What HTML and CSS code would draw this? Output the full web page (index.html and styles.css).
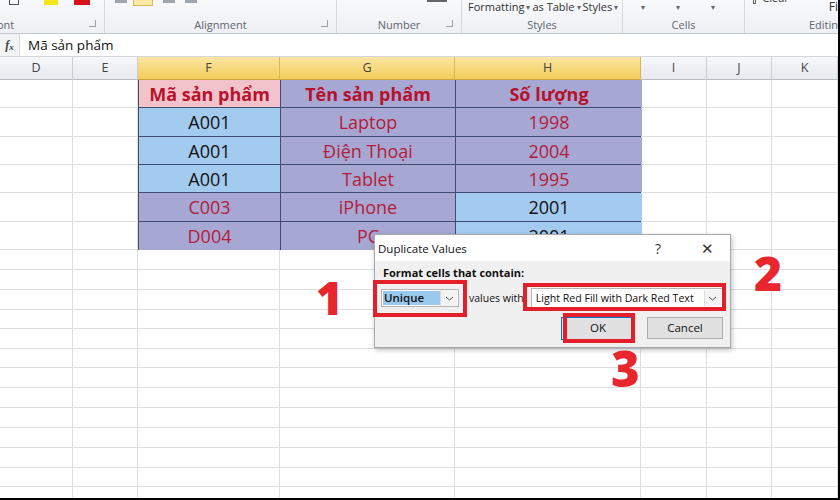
FILE: index.html
```html
<!DOCTYPE html>
<html lang="vi">
<head>
<meta charset="utf-8">
<title>Duplicate Values</title>
<link rel="stylesheet" href="styles.css">
</head>
<body>
<div class="frame">
  <div class="ribbon">
    <div class="grp g0">
      <div class="tops"><span class="ic grid"></span><span class="ic yel"></span><span class="ic red"></span></div>
      <div class="lbl">ont</div><span class="launch"></span>
    </div>
    <div class="grp g1">
      <div class="tops"><span class="ic gl"></span><span class="ic hl"></span><span class="ic gl"></span><span class="ic gl"></span></div>
      <div class="lbl">Alignment</div><span class="launch"></span>
    </div>
    <div class="grp g2">
      <div class="tops"><span class="ic dec"></span></div>
      <div class="lbl">Number</div><span class="launch"></span>
    </div>
    <div class="grp g3">
      <div class="tops txt">Formatting <b>▾</b> as Table <b>▾</b> Styles <b>▾</b></div>
      <div class="lbl">Styles</div>
    </div>
    <div class="grp g4">
      <div class="tops arrows"><b>▾</b><b>▾</b><b>▾</b></div>
      <div class="lbl">Cells</div>
    </div>
    <div class="grp g5">
      <div class="tops txt"><span class="eraser"></span><span class="clear">Clear</span><span class="fi">Fi</span></div>
      <div class="lbl">Editin</div>
    </div>
  </div>
  <div class="fbar">
    <div class="fx"><i>f</i><i class="x">x</i></div>
    <div class="finput">Mã sản phẩm</div>
  </div>
  <div class="sheet">
    <div class="ch">D</div><div class="ch">E</div><div class="ch sel">F</div><div class="ch sel">G</div><div class="ch sel">H</div><div class="ch">I</div><div class="ch">J</div><div class="ch">K</div>

    <div class="tbl">
      <div class="t pink hd">Mã sản phẩm</div><div class="t lav hd">Tên sản phẩm</div><div class="t lav hd">Số lượng</div>
      <div class="t blue">A001</div><div class="t lav">Laptop</div><div class="t lav">1998</div>
      <div class="t blue">A001</div><div class="t lav">Điện Thoại</div><div class="t lav">2004</div>
      <div class="t blue">A001</div><div class="t lav">Tablet</div><div class="t lav">1995</div>
      <div class="t lav">C003</div><div class="t lav">iPhone</div><div class="t blue">2001</div>
      <div class="t lav">D004</div><div class="t lav">PC</div><div class="t blue">2001</div>
    </div>

    <div class="c"></div><div class="c"></div><div class="c"></div><div class="c"></div><div class="c"></div>
    <div class="c"></div><div class="c"></div><div class="c"></div><div class="c"></div><div class="c"></div>
    <div class="c"></div><div class="c"></div><div class="c"></div><div class="c"></div><div class="c"></div>
    <div class="c"></div><div class="c"></div><div class="c"></div><div class="c"></div><div class="c"></div>
    <div class="c"></div><div class="c"></div><div class="c"></div><div class="c"></div><div class="c"></div>
    <div class="c"></div><div class="c"></div><div class="c"></div><div class="c"></div><div class="c"></div>

    <div class="c"></div><div class="c"></div><div class="c"></div><div class="c"></div><div class="c"></div><div class="c"></div><div class="c"></div><div class="c"></div>
    <div class="c"></div><div class="c"></div><div class="c"></div><div class="c"></div><div class="c"></div><div class="c"></div><div class="c"></div><div class="c"></div>
    <div class="c"></div><div class="c"></div><div class="c"></div><div class="c"></div><div class="c"></div><div class="c"></div><div class="c"></div><div class="c"></div>
    <div class="c"></div><div class="c"></div><div class="c"></div><div class="c"></div><div class="c"></div><div class="c"></div><div class="c"></div><div class="c"></div>
    <div class="c"></div><div class="c"></div><div class="c"></div><div class="c"></div><div class="c"></div><div class="c"></div><div class="c"></div><div class="c"></div>
    <div class="c"></div><div class="c"></div><div class="c"></div><div class="c"></div><div class="c"></div><div class="c"></div><div class="c"></div><div class="c"></div>
    <div class="c"></div><div class="c"></div><div class="c"></div><div class="c"></div><div class="c"></div><div class="c"></div><div class="c"></div><div class="c"></div>
    <div class="c"></div><div class="c"></div><div class="c"></div><div class="c"></div><div class="c"></div><div class="c"></div><div class="c"></div><div class="c"></div>
    <div class="c"></div><div class="c"></div><div class="c"></div><div class="c"></div><div class="c"></div><div class="c"></div><div class="c"></div><div class="c"></div>
    <div class="c"></div><div class="c"></div><div class="c"></div><div class="c"></div><div class="c"></div><div class="c"></div><div class="c"></div><div class="c"></div>
    <div class="c"></div><div class="c"></div><div class="c"></div><div class="c"></div><div class="c"></div><div class="c"></div><div class="c"></div><div class="c"></div>
    <div class="c"></div><div class="c"></div><div class="c"></div><div class="c"></div><div class="c"></div><div class="c"></div><div class="c"></div><div class="c"></div>
    <div class="c"></div><div class="c"></div><div class="c"></div><div class="c"></div><div class="c"></div><div class="c"></div><div class="c"></div><div class="c"></div>
  </div>

  <div class="dialog">
    <div class="dtitle"><span>Duplicate Values</span><span class="q">?</span><span class="close">✕</span></div>
    <div class="dbody">
      <div class="dlabel">Format cells that contain:</div>
      <div class="drow">
        <div class="sel1"><span class="hlt">Unique</span><span class="arr"><svg width="9" height="5" viewBox="0 0 9 5"><path d="M1 1l3.5 3L8 1" fill="none" stroke="#555" stroke-width="1"/></svg></span></div>
        <span class="vw">values with</span>
        <div class="sel2"><span class="opt">Light Red Fill with Dark Red Text</span><span class="arr"><svg width="9" height="5" viewBox="0 0 9 5"><path d="M1 1l3.5 3L8 1" fill="none" stroke="#555" stroke-width="1"/></svg></span></div>
      </div>
      <div class="dbtns">
        <div class="btn ok">OK</div>
        <div class="btn">Cancel</div>
      </div>
    </div>
  </div>

  <div class="mark m1"></div>
  <div class="mark m2"></div>
  <div class="mark m3"></div>
  <div class="num n1">1</div>
  <div class="num n2">2</div>
  <div class="num n3">3</div>
</div>
</body>
</html>
```

FILE: styles.css
```css
* { box-sizing: border-box; }
html, body { margin: 0; padding: 0; background: #000; }
.frame {
  position: relative;
  width: 840px;
  height: 500px;
  overflow: hidden;
  background: #fff;
  border-right: 2px solid #000;
  border-bottom: 2px solid #000;
  font-family: "Open Sans", "Liberation Sans", sans-serif;
}

/* ribbon */
.ribbon {
  display: flex;
  height: 34px;
  background: linear-gradient(#f8f9fb, #eef0f4);
  border-bottom: 1px solid #c3c8cf;
}
.grp {
  position: relative;
  flex-shrink: 0;
  border-right: 1px solid #d6dae0;
  display: flex;
  flex-direction: column;
  white-space: nowrap;
}
.g0 { width: 105px; }
.g1 { width: 232px; }
.g2 { width: 125px; }
.g3 { width: 161px; }
.g4 { width: 122px; }
.g5 { flex: 1 1 0; min-width: 0; overflow: hidden; border-right: none; }
.tops { height: 18px; display: flex; align-items: flex-start; font-size: 11px; color: #333; }
.lbl { text-align: center; font-size: 11px; color: #5f6670; line-height: 14px; }
.g0 .lbl { text-align: left; margin-left: -3px; }
.g5 .lbl { text-align: left; padding-left: 64px; }
.launch {
  position: absolute; right: 8px; bottom: 6px; width: 7px; height: 7px;
  border-right: 1px solid #9aa1aa; border-bottom: 1px solid #9aa1aa;
}
.ic { display: block; height: 5px; }
.grid { width: 10px; margin-left: 9px; border: 1px solid #555; border-top: none; }
.yel { width: 14px; margin-left: 25px; background: #f6e51a; }
.red { width: 16px; margin-left: 16px; background: #d4141a; }
.gl { width: 12px; margin-left: 10px; height: 3px; background: #9ea6b0; }
.hl { width: 20px; height: 6px; margin-left: 6px; background: #fbe9a5; border: 1px solid #e0b850; border-top: none; }
.dec { width: 20px; height: 2px; margin-left: 90px; background: #666; }
.txt { padding-left: 6px; line-height: 14px; }
.txt b { font-weight: normal; font-size: 8px; color: #666; margin: 0 2px; }
.arrows b { font-weight: normal; font-size: 8px; color: #666; margin-left: 18px; margin-right: 13px; line-height: 14px; }
.g5 .txt { color: #333; padding-left: 6px; }
.eraser { display: block; width: 12px; height: 4px; border: 1px solid #666; border-top: none; margin: 0 6px 0 2px; }
.clear { display: block; margin-top: -9px; }
.fi { margin-left: 40px; font-size: 12px; }

/* formula bar */
.fbar {
  display: flex;
  height: 23px;
  border-bottom: 1px solid #d3d7dd;
  background: #fff;
}
.fx {
  width: 20px;
  display: flex;
  align-items: center;
  justify-content: center;
  font-family: "Liberation Serif", serif;
  font-style: italic;
  font-weight: bold;
  font-size: 12px;
  color: #444;
  background: #f2f3f5;
  border-right: 1px solid #d6d9de;
}
.fx .x { font-size: 9px; margin-top: 3px; }
.finput {
  padding-left: 8px;
  font-size: 13.5px;
  line-height: 22px;
  color: #111;
}

/* sheet */
.sheet {
  display: grid;
  grid-template-columns: 73px 65px 142px 175px 186px 66px 65px 66px;
  grid-template-rows: 23px 28px 29px 28px 28px 29px 28px 20px 20px 20px 19px 20px 19px 20px 20px 20px 20px 20px 19px 20px;
}
.ch {
  background: linear-gradient(#f7f8fa, #e6e9ee);
  border-right: 1px solid #c9ced6;
  border-bottom: 1px solid #b9bec6;
  font-size: 12.5px;
  color: #444;
  text-align: center;
  line-height: 22px;
}
.ch.sel {
  background: linear-gradient(#fbe6a2, #f3cd5a);
  border-right-color: #d9b65a;
  border-bottom-color: #c9a440;
}
.c {
  border-right: 1px solid #dcdee2;
  border-bottom: 1px solid #dcdee2;
}
.tbl {
  grid-column: 3 / 6;
  grid-row: 2 / 8;
  display: grid;
  grid-template-columns: 142px 175px 186px;
  grid-template-rows: 28px 29px 28px 28px 29px 28px;
  border-left: 2px solid #4a4d55;
  border-bottom: 2px solid #4a4d55;
  border-right: 2px solid #4a4d55;
  margin-left: -1px;
  margin-right: -1px;
}
.t {
  border-right: 1px solid #3d4c70;
  border-bottom: 1px solid #3d4c70;
  font-size: 18px;
  text-align: center;
  line-height: 29px;
  color: #b41c3a;
}
.t:nth-child(3n) { border-right: none; }
.t:nth-last-child(-n+3) { border-bottom: none; }
.blue { background: #a3cbef; color: #111; }
.lav { background: #a6a7d3; }
.pink { background: #f3c3cc; }
.hd { font-weight: bold; color: #b8112c; }

/* dialog */
.dialog {
  position: absolute;
  left: 374px;
  top: 234px;
  width: 357px;
  height: 114px;
  background: #f0f0f0;
  border: 1px solid #a9a9a9;
  box-shadow: 1px 2px 5px rgba(0,0,0,0.25);
  font-size: 11.5px;
  color: #111;
  white-space: nowrap;
}
.dtitle {
  display: flex;
  align-items: center;
  height: 26px;
  background: #fff;
  padding-left: 3px;
}
.dtitle .q { margin-left: auto; margin-right: 40px; font-size: 14px; color: #333; }
.dtitle .close { margin-right: 16px; font-size: 15px; color: #333; }
.dbody { padding: 4px 7px 0 6px; }
.dlabel { font-weight: bold; font-size: 11px; line-height: 16px; padding-left: 2px; }
.drow { display: flex; align-items: center; margin-top: 7px; height: 20px; }
.sel1 {
  display: flex; align-items: center; flex-shrink: 0;
  width: 78px; height: 18px;
  border: 1px solid #b5b5b5; background: #fff; padding: 1px;
}
.hlt { background: #99c9ef; color: #111; flex: 1; height: 14px; line-height: 14px; padding-left: 1px; font-weight: 600; }
.arr { width: 17px; height: 16px; flex-shrink: 0; display: flex; align-items: center; justify-content: center; border-left: 1px solid #ddd; background: #f3f3f3; }
.vw { margin-left: 10px; flex-shrink: 0; font-size: 10.5px; }
.sel2 {
  display: flex; align-items: center; flex-shrink: 0;
  margin-left: 7px;
  width: 192px; height: 20px;
  border: 1px solid #b5b5b5; background: #fff; padding: 1px 1px 1px 4px;
}
.opt { flex: 1; overflow: hidden; font-size: 10.6px; }
.dbtns { display: flex; justify-content: flex-end; gap: 12px; margin-top: 9px; }
.btn {
  width: 76px; height: 22px;
  border: 1px solid #adadad;
  background: #e1e1e1;
  text-align: center;
  line-height: 20px;
}
.btn.ok { width: 74px; height: 23px; border: 1px solid #0078d7; }

/* annotations */
.mark { position: absolute; border: 4px solid #e3202a; }
.m1 { left: 373px; top: 280px; width: 94px; height: 37px; }
.m2 { left: 523px; top: 283px; width: 203px; height: 28px; }
.m3 { left: 563px; top: 313px; width: 72px; height: 30px; }
.num {
  position: absolute;
  font-family: "Open Sans", sans-serif;
  font-weight: 800;
  font-size: 46px;
  line-height: 46px;
  color: #e8262d;
}
.n1 { left: 316px; top: 274px; }
.n2 { left: 754px; top: 250px; font-size: 48px; }
.n3 { left: 611px; top: 345px; font-size: 49px; }
```
